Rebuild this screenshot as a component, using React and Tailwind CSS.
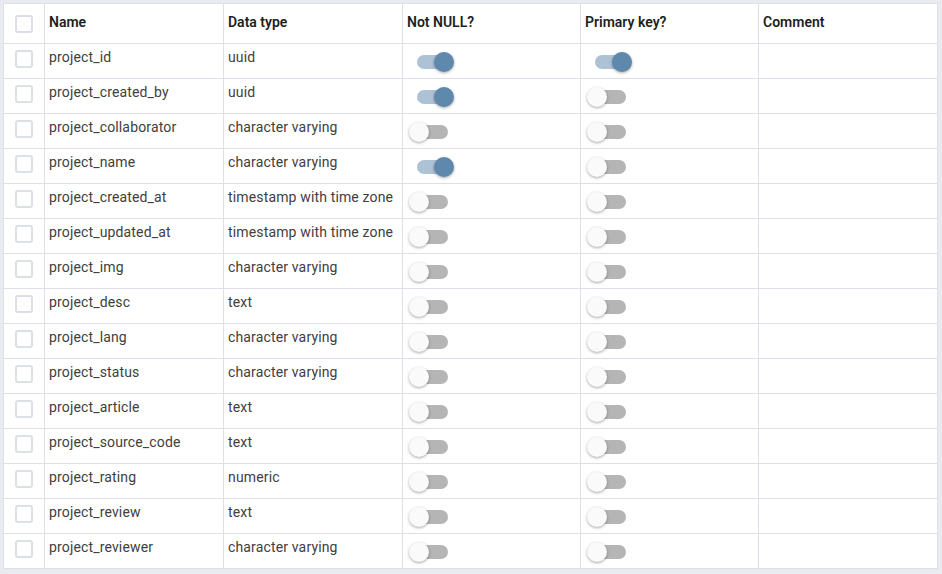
const columns = [
  { name: 'project_id', type: 'uuid', notNull: true, primary: true },
  { name: 'project_created_by', type: 'uuid', notNull: true, primary: false },
  { name: 'project_collaborator', type: 'character varying', notNull: false, primary: false },
  { name: 'project_name', type: 'character varying', notNull: true, primary: false },
  { name: 'project_created_at', type: 'timestamp with time zone', notNull: false, primary: false },
  { name: 'project_updated_at', type: 'timestamp with time zone', notNull: false, primary: false },
  { name: 'project_img', type: 'character varying', notNull: false, primary: false },
  { name: 'project_desc', type: 'text', notNull: false, primary: false },
  { name: 'project_lang', type: 'character varying', notNull: false, primary: false },
  { name: 'project_status', type: 'character varying', notNull: false, primary: false },
  { name: 'project_article', type: 'text', notNull: false, primary: false },
  { name: 'project_source_code', type: 'text', notNull: false, primary: false },
  { name: 'project_rating', type: 'numeric', notNull: false, primary: false },
  { name: 'project_review', type: 'text', notNull: false, primary: false },
  { name: 'project_reviewer', type: 'character varying', notNull: false, primary: false },
]

const gridCols = 'grid grid-cols-[41px_179px_179px_178px_178px_179px]'
const cell = 'border-r border-[#dde0e7]'

// Plain square checkbox, unchecked
const Checkbox = ({ top }) => (
  <div className={`ml-[11px] ${top} w-[18px] h-[18px] rounded-[3px] border-2 border-[#dcdfe5] bg-white`} />
)

// Switch in the style of the grid's toggle cells
const Toggle = ({ on }) => (
  <div className="relative ml-[6px] mt-[8px] w-[45px] h-[20px]">
    <div
      className={`absolute left-[8px] top-[3px] w-[31px] h-[14px] rounded-full ${
        on ? 'bg-[#aec2d5]' : 'bg-[#b5b5b5]'
      }`}
    />
    <div
      className={`absolute top-0 w-[20px] h-[20px] rounded-full shadow-[0_1px_3px_rgba(0,0,0,0.35)] ${
        on ? 'left-[25px] bg-[#5f88ad]' : 'left-0 bg-[#fafafa]'
      }`}
    />
  </div>
)

export default function App() {
  return (
    <div className="w-[942px] h-[574px] bg-[#e9ebf0] pt-[3px] pl-[3px] font-['Roboto',sans-serif] text-[14px] leading-[20px]">
      <div className="w-[935px] bg-white border-l border-t border-[#dde0e7]">
        {/* Header */}
        <div className={`${gridCols} h-[40px] border-b border-[#dde0e7] text-[#1e1e1e] font-semibold`}>
          <div className={cell}>
            <Checkbox top="mt-[11px]" />
          </div>
          <div className={`${cell} pl-[4px] pt-[8px]`}>Name</div>
          <div className={`${cell} pl-[4px] pt-[8px]`}>Data type</div>
          <div className={`${cell} pl-[4px] pt-[8px]`}>Not NULL?</div>
          <div className={`${cell} pl-[4px] pt-[8px]`}>Primary key?</div>
          <div className={`${cell} pl-[4px] pt-[8px]`}>Comment</div>
        </div>

        {/* Rows */}
        {columns.map((col) => (
          <div
            key={col.name}
            className={`${gridCols} h-[35px] border-b border-[#dde0e7] text-[#404040] tracking-[0.15px]`}
          >
            <div className={cell}>
              <Checkbox top="mt-[6px]" />
            </div>
            <div className={`${cell} pl-[4px] pt-[3px]`}>{col.name}</div>
            <div className={`${cell} pl-[4px] pt-[3px]`}>{col.type}</div>
            <div className={cell}>
              <Toggle on={col.notNull} />
            </div>
            <div className={cell}>
              <Toggle on={col.primary} />
            </div>
            <div className={cell} />
          </div>
        ))}
      </div>
    </div>
  )
}
